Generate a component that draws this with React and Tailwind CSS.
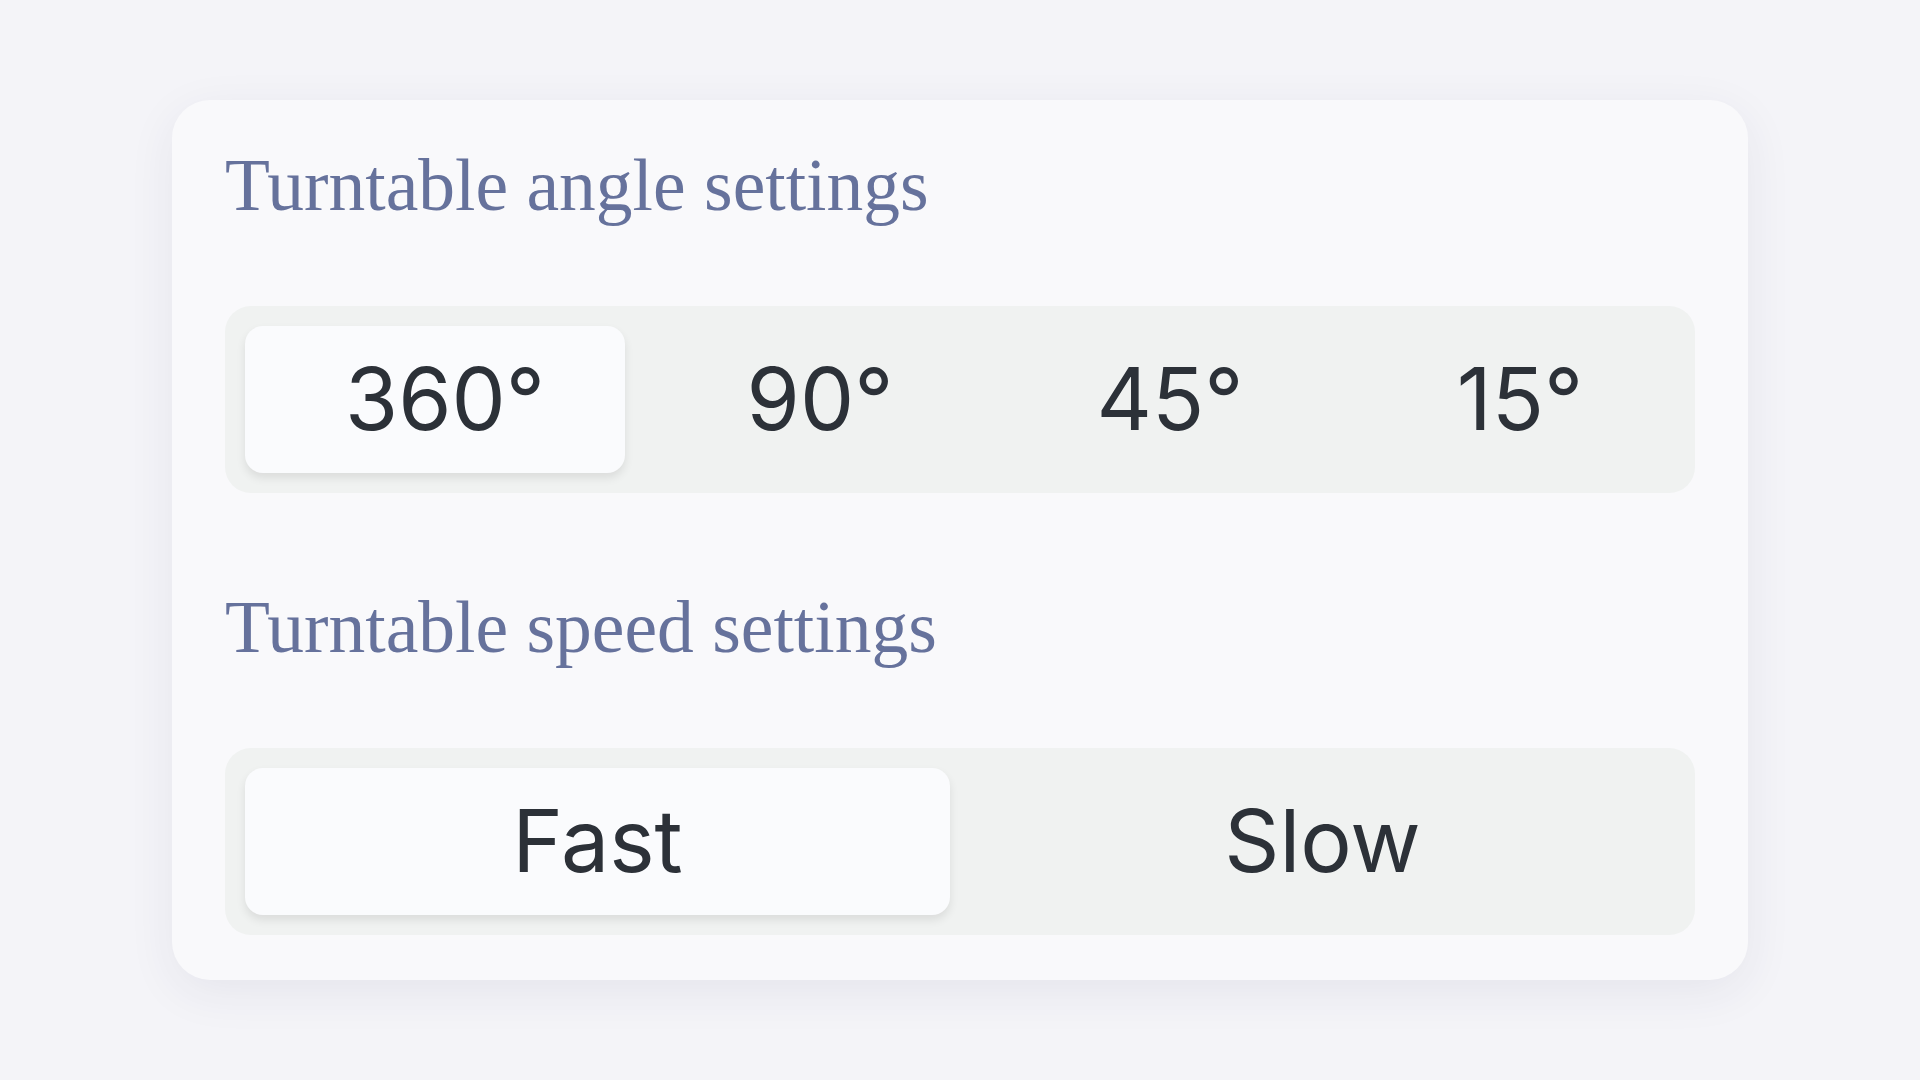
import React, { useState } from "react";

const angles = ["360°", "90°", "45°", "15°"];
const speeds = ["Fast", "Slow"];

function Segmented({ options, value, onChange, wideFirst }) {
  return (
    <div className="flex h-[188px] gap-[20px] rounded-[26px] bg-[#f0f2f1] p-[20px]">
      {options.map((opt, i) => {
        const active = opt === value;
        const sizing = wideFirst
          ? i === 0
            ? "w-[380px] shrink-0 pl-[20px] "
            : "flex-1 basis-0 pl-[20px] "
          : "flex-1 basis-0 ";
        return (
          <button
            key={opt}
            type="button"
            onClick={() => onChange(opt)}
            className={
              sizing +
              "flex items-center justify-center rounded-[18px] text-[86px] leading-none text-[#2c3138] " +
              (active
                ? "bg-[#fafbfd] shadow-[0_5px_10px_rgba(0,0,0,0.09)]"
                : "bg-transparent")
            }
            style={{ fontFamily: "Inter, 'Liberation Sans', sans-serif" }}
          >
            {opt}
          </button>
        );
      })}
    </div>
  );
}

export default function App() {
  const [angle, setAngle] = useState("360°");
  const [speed, setSpeed] = useState("Fast");

  return (
    <div className="flex h-[1080px] w-[1920px] items-center justify-center bg-[#f4f4f8]">
      <div className="flex h-[880px] w-[1576px] flex-col rounded-[38px] bg-[#f9f9fb] px-[53px] pt-[49px] pb-[45px] shadow-[0_12px_48px_rgba(40,40,80,0.07)]">
        <h2
          className="mb-[83px] text-[73.5px] leading-none font-normal text-[#66729c]"
          style={{ fontFamily: "'Liberation Serif', 'Times New Roman', serif" }}
        >
          Turntable angle settings
        </h2>
        <Segmented options={angles} value={angle} onChange={setAngle} wideFirst />

        <h2
          className="mt-[98px] mb-[83px] text-[73.5px] leading-none font-normal text-[#66729c]"
          style={{ fontFamily: "'Liberation Serif', 'Times New Roman', serif" }}
        >
          Turntable speed settings
        </h2>
        <Segmented options={speeds} value={speed} onChange={setSpeed} />
      </div>
    </div>
  );
}
